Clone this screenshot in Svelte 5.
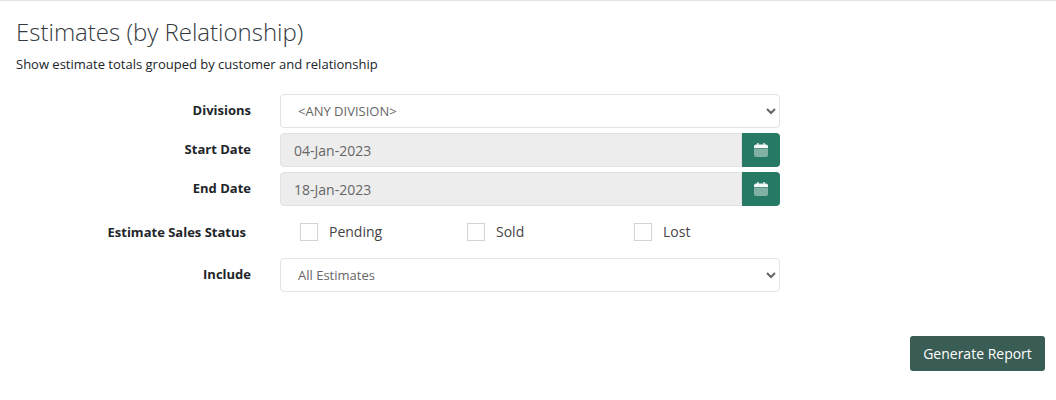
<script>
	const statuses = ['Pending', 'Sold', 'Lost'];
</script>

<div class="page">
	<h1>Estimates (by Relationship)</h1>
	<p class="sub">Show estimate totals grouped by customer and relationship</p>

	<form class="form">
		<div class="row">
			<label class="lbl" for="div">Divisions</label>
			<select id="div" class="ctl sel"><option>&lt;ANY DIVISION&gt;</option></select>
		</div>
		<div class="row date">
			<label class="lbl" for="start">Start Date</label>
			<div class="group">
				<input id="start" class="ctl" value="04-Jan-2023" disabled />
				<button type="button" class="cal" aria-label="Pick start date">{@render calendar()}</button>
			</div>
		</div>
		<div class="row date">
			<label class="lbl" for="end">End Date</label>
			<div class="group">
				<input id="end" class="ctl" value="18-Jan-2023" disabled />
				<button type="button" class="cal" aria-label="Pick end date">{@render calendar()}</button>
			</div>
		</div>
		<div class="row status">
			<span class="lbl">Estimate Sales Status</span>
			<div class="checks">
				{#each statuses as s}
					<label class="check"><input type="checkbox" /><span>{s}</span></label>
				{/each}
			</div>
		</div>
		<div class="row">
			<label class="lbl" for="inc">Include</label>
			<select id="inc" class="ctl sel"><option>All Estimates</option></select>
		</div>
	</form>

	<div class="actions">
		<button type="button" class="go">Generate Report</button>
	</div>
</div>

{#snippet calendar()}
	<svg width="14" height="14" viewBox="0 0 14 14">
		<path d="M0 5.500h14v6.500a2 2 0 0 1-2 2H2a2 2 0 0 1-2-2z" fill="#fff" opacity=".42" />
		<path d="M0 5V3a2 2 0 0 1 2-1.500h1.200V0h1.400v1.500h4.800V0h1.400v1.500H12A2 2 0 0 1 14 3v2z" fill="#fff" opacity=".95" />
	</svg>
{/snippet}

<style>
	:global(body) {
		margin: 0;
		background: #fff;
		font-family: "Open Sans", sans-serif;
		color: #212529;
	}
	.page {
		border-top: 1px solid #e3e3e3;
		padding: 0 11px 0 16px;
	}
	h1 {
		margin: 0;
		padding-top: 14px;
		font-size: 24px;
		line-height: 33px;
		font-weight: 300;
		color: #343a40;
	}
	.sub {
		margin: 7px 0 0;
		font-size: 13px;
		line-height: 18px;
	}
	.form {
		margin-top: 21px;
		width: 764px;
	}
	.row {
		display: flex;
		align-items: center;
		height: 34px;
		margin-bottom: 5px;
	}
	.lbl {
		width: 235px;
		flex: none;
		margin-top: -3px;
		text-align: right;
		font-size: 13px;
		font-weight: 700;
		color: #212529;
	}
	.ctl {
		box-sizing: border-box;
		height: 34px;
		margin-left: 29px;
		border: 1px solid #e2e2e2;
		border-radius: 4px;
		font-family: inherit;
		font-size: 13px;
		color: #666;
		background-color: #fff;
	}
	.sel {
		width: 500px;
		padding: 0 8px 0 13px;
	}
	.group {
		display: flex;
		width: 500px;
		margin-left: 29px;
	}
	.group .ctl {
		flex: 1;
		min-width: 0;
		margin: 0;
		padding: 0 13px;
		background: #ededed;
		border-radius: 4px 0 0 4px;
		font-size: 14px;
		opacity: 1;
	}
	.cal {
		width: 38px;
		height: 34px;
		padding: 0;
		border: 0;
		border-radius: 0 4px 4px 0;
		background: #267965;
		display: flex;
		align-items: center;
		justify-content: center;
	}
	.status {
		margin-top: 9px;
		margin-bottom: 9px;
	}
	.status .lbl {
		width: 230px;
		margin-top: 0;
	}
	.checks {
		display: flex;
		margin-left: 54px;
	}
	.check {
		width: 167px;
		display: flex;
		align-items: center;
		gap: 11px;
		font-size: 14px;
		color: #444;
	}
	.check span {
		margin-top: -2px;
	}
	.check input {
		appearance: none;
		box-sizing: border-box;
		width: 18px;
		height: 18px;
		margin: 0;
		border: 1px solid #d4d4d4;
		background: #fff;
	}
	.actions {
		display: flex;
		justify-content: flex-end;
		margin-top: 44px;
	}
	.go {
		height: 35px;
		width: 135px;
		padding: 0;
		border: 0;
		border-radius: 3px;
		background: #395c54;
		color: #fff;
		font-family: inherit;
		font-size: 14px;
	}
</style>
